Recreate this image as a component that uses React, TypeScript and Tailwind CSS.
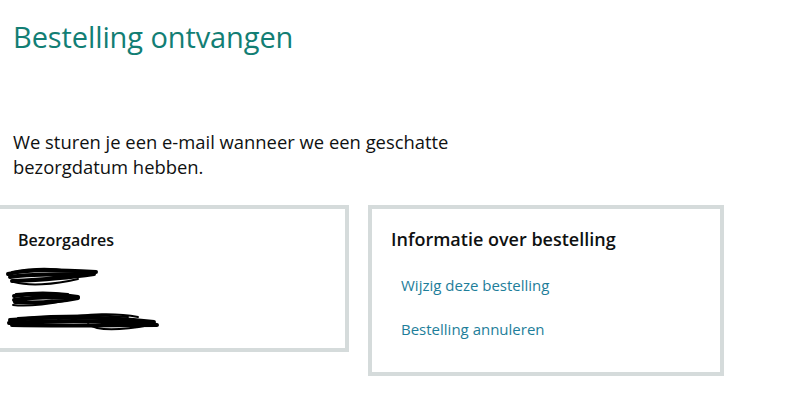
import React from "react";

function Scribble() {
  return (
    <svg width="170" height="75" viewBox="0 0 170 75" className="block" fill="none">
      <g stroke="#000" strokeLinecap="round" strokeLinejoin="round">
        {/* line 1 */}
        <path d="M10 12 C30 7 60 8 98 10" strokeWidth="4" />
        <path d="M12 15 C40 11 70 13 96 12 C70 16 40 18 14 19" strokeWidth="4" />
        <path d="M16 20 C30 24 55 23 80 17" strokeWidth="2" />
        <path d="M14 10 C35 6 55 6 70 9" strokeWidth="2" />
        {/* line 2 */}
        <path d="M16 34 C35 31 60 32 80 35" strokeWidth="4" />
        <path d="M16 38 C35 35 60 35 80 36 C60 40 35 41 17 40" strokeWidth="4" />
        <path d="M18 32 C35 30 55 30 70 32" strokeWidth="2" />
        <path d="M15 43 C30 45 50 42 66 39" strokeWidth="2" />
        {/* line 3 */}
        <path d="M12 58 C50 55 100 54 156 60" strokeWidth="4" />
        <path d="M11 61 C60 58 110 58 159 63 C120 63 70 64 14 63" strokeWidth="4" />
        <path d="M60 57 C90 51 120 51 140 55" strokeWidth="2" />
        <path d="M90 62 C100 70 125 68 152 63" strokeWidth="2" />
        <path d="M20 56 C60 53 100 53 130 55" strokeWidth="2" />
      </g>
    </svg>
  );
}

export default function App() {
  return (
    <div
      className="w-[800px] h-[407px] overflow-hidden bg-white text-[#0f1111]"
      style={{ fontFamily: '"Open Sans", "Noto Sans", sans-serif' }}
    >
      <div className="pl-[13px] pt-[17px]">
        <h1 className="text-[29px] leading-[40px] text-[#127e74] font-normal tracking-[-0.1px]">
          Bestelling ontvangen
        </h1>
        <p className="mt-[72px] text-[18.4px] leading-[25px] w-[480px]">
          We sturen je een e-mail wanneer we een geschatte bezorgdatum hebben.
        </p>
      </div>
      <div className="flex items-start gap-[19px] ml-[-7px] mt-[26px]">
        <div className="w-[356px] h-[147px] border-4 border-[#d5dbdb] pl-[21px] pt-[20px]">
          <div className="text-[16px] leading-[22px] font-semibold">Bezorgadres</div>
          <div className="ml-[-20px] mt-[11px]">
            <Scribble />
          </div>
        </div>
        <div className="w-[356px] h-[171px] border-4 border-[#d5dbdb] pl-[19px] pt-[18px]">
          <div className="text-[18px] leading-[24px] font-semibold">Informatie over bestelling</div>
          <div className="pl-[10px] mt-[23px] flex flex-col gap-[22px] text-[15px] leading-[22px] text-[#1e7e9a]">
            <span>Wijzig deze bestelling</span>
            <span>Bestelling annuleren</span>
          </div>
        </div>
      </div>
    </div>
  );
}
